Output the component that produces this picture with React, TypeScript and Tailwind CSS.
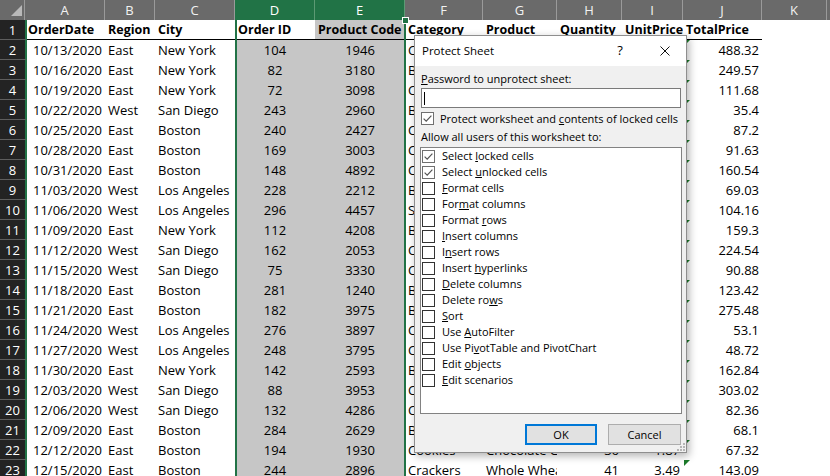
import React from "react";

type Align = "l" | "r" | "c";

const colHeads = [
  { k: "A", w: "w-[80px]", sel: false },
  { k: "B", w: "w-[50px]", sel: false },
  { k: "C", w: "w-[80px]", sel: false },
  { k: "D", w: "w-[80px]", sel: true },
  { k: "E", w: "w-[90px]", sel: true },
  { k: "F", w: "w-[78px]", sel: false },
  { k: "G", w: "w-[74px]", sel: false },
  { k: "H", w: "w-[65px]", sel: false },
  { k: "I", w: "w-[61px]", sel: false },
  { k: "J", w: "w-[79px]", sel: false },
  { k: "K", w: "w-[65px]", sel: false },
  { k: "L", w: "w-[60px]", sel: false },
];

// data cell widths (A is 2px narrower because of the green edge on the row headers)
const cellW = [
  "w-[78px]",
  "w-[50px]",
  "w-[80px]",
  "w-[80px]",
  "w-[90px]",
  "w-[78px]",
  "w-[74px]",
  "w-[65px]",
  "w-[61px]",
  "w-[79px]",
  "w-[65px]",
  "w-[60px]",
];

const aligns: Align[] = ["r", "l", "l", "c", "c", "l", "l", "r", "r", "r", "l", "l"];

const alignCls: Record<Align, string> = {
  l: "justify-start pl-[3px]",
  r: "justify-end pr-[3px]",
  c: "justify-center",
};

const headers = [
  "OrderDate",
  "Region",
  "City",
  "Order ID",
  "Product Code",
  "Category",
  "Product",
  "Quantity",
  "UnitPrice",
  "TotalPrice",
];

const rows: string[][] = [
  ["10/13/2020", "East", "New York", "104", "1946", "Crackers", "Whole Wheat", "56", "8.72", "488.32"],
  ["10/16/2020", "East", "New York", "82", "3180", "Bars", "Carrot", "141", "1.77", "249.57"],
  ["10/19/2020", "East", "New York", "72", "3098", "Cookies", "Chocolate Chip", "59", "1.87", "111.68"],
  ["10/22/2020", "West", "San Diego", "243", "2960", "Bars", "Bran", "20", "1.77", "35.4"],
  ["10/25/2020", "East", "Boston", "240", "2427", "Crackers", "Whole Wheat", "25", "3.49", "87.2"],
  ["10/28/2020", "East", "Boston", "169", "3003", "Cookies", "Arrowroot", "42", "2.18", "91.63"],
  ["10/31/2020", "East", "Boston", "148", "4892", "Cookies", "Oatmeal Raisin", "58", "2.84", "160.54"],
  ["11/03/2020", "West", "Los Angeles", "228", "2212", "Bars", "Carrot", "39", "1.77", "69.03"],
  ["11/06/2020", "West", "Los Angeles", "296", "4457", "Snacks", "Potato Chips", "62", "1.68", "104.16"],
  ["11/09/2020", "East", "New York", "112", "4208", "Bars", "Bran", "85", "1.87", "159.3"],
  ["11/12/2020", "West", "San Diego", "162", "2053", "Cookies", "Chocolate Chip", "123", "1.87", "224.54"],
  ["11/15/2020", "West", "San Diego", "75", "3330", "Crackers", "Whole Wheat", "26", "3.49", "90.88"],
  ["11/18/2020", "East", "Boston", "281", "1240", "Bars", "Carrot", "69", "1.77", "123.42"],
  ["11/21/2020", "East", "Boston", "182", "3975", "Bars", "Bran", "147", "1.87", "275.48"],
  ["11/24/2020", "West", "Los Angeles", "276", "3897", "Cookies", "Arrowroot", "24", "2.18", "53.1"],
  ["11/27/2020", "West", "Los Angeles", "248", "3795", "Cookies", "Oatmeal Raisin", "17", "2.84", "48.72"],
  ["11/30/2020", "East", "New York", "142", "2593", "Bars", "Carrot", "92", "1.77", "162.84"],
  ["12/03/2020", "West", "San Diego", "88", "3953", "Cookies", "Chocolate Chip", "162", "1.87", "303.02"],
  ["12/06/2020", "West", "San Diego", "132", "4286", "Crackers", "Whole Wheat", "24", "3.49", "82.36"],
  ["12/09/2020", "East", "Boston", "284", "2629", "Bars", "Bran", "36", "1.87", "68.1"],
  ["12/12/2020", "East", "Boston", "194", "1930", "Cookies", "Chocolate Chip", "36", "1.87", "67.32"],
  ["12/15/2020", "East", "Boston", "244", "2896", "Crackers", "Whole Wheat", "41", "3.49", "143.09"],
];

const Box = ({ on }: { on?: boolean }) =>
  on ? (
    <span className="w-[13px] h-[13px] shrink-0 border border-[#707070] bg-white flex items-center justify-center">
      <svg width="11" height="11" viewBox="0 0 11 11">
        <path d="M1.6 5.6 L4.2 8.2 L9.4 2.6" fill="none" stroke="#555" strokeWidth="1.2" />
      </svg>
    </span>
  ) : (
    <span className="w-[13px] h-[13px] shrink-0 border border-[#333] bg-white" />
  );

const options: React.ReactNode[] = [
  <>Select <u>l</u>ocked cells</>,
  <>Select <u>u</u>nlocked cells</>,
  <><u>F</u>ormat cells</>,
  <>For<u>m</u>at columns</>,
  <>Format <u>r</u>ows</>,
  <><u>I</u>nsert columns</>,
  <>I<u>n</u>sert rows</>,
  <>Insert <u>h</u>yperlinks</>,
  <><u>D</u>elete columns</>,
  <>Delete ro<u>w</u>s</>,
  <><u>S</u>ort</>,
  <>Use <u>A</u>utoFilter</>,
  <>Use Pi<u>v</u>otTable and PivotChart</>,
  <>Edit <u>o</u>bjects</>,
  <><u>E</u>dit scenarios</>,
];

const ProtectDialog = () => (
  <div className="absolute left-[414px] top-[35px] w-[273px] h-[418px] border border-[#8e8e8e] bg-[#f0f0f0] shadow-[2px_3px_8px_rgba(0,0,0,0.3)] flex flex-col font-['Open_Sans',sans-serif] text-[11px] text-black">
    <div className="h-[30px] shrink-0 bg-white flex items-center pl-[7px] pr-[16px]">
      <span className="flex-1 text-[11.5px]">Protect Sheet</span>
      <span className="w-[10px] text-center text-[13px]">?</span>
      <svg className="ml-[35px]" width="10" height="10" viewBox="0 0 10 10">
        <path d="M0.5 0.5 L9.5 9.5 M9.5 0.5 L0.5 9.5" stroke="#111" strokeWidth="1" />
      </svg>
    </div>

    <div className="flex flex-col px-[6px]">
      <div className="mt-[6px] h-[14px] leading-[14px]">
        <u>P</u>assword to unprotect sheet:
      </div>
      <div className="mt-[2px] h-[20px] w-[260px] border border-[#7a7a7a] bg-white flex items-center pl-[2px]">
        <span className="w-[1px] h-[13px] bg-black" />
      </div>
      <div className="mt-[3px] h-[15px] flex items-center">
        <Box on />
        <span className="ml-[6px] leading-[15px]">
          Protect worksheet and <u>c</u>ontents of locked cells
        </span>
      </div>
      <div className="mt-[4px] h-[14px] leading-[14px]">Allow all users of this worksheet to:</div>
      <div className="mt-[3px] -ml-[1px] w-[262px] h-[267px] border border-[#828282] bg-white flex flex-col">
        {options.map((o, i) => (
          <div key={i} className="h-[16px] flex items-center pl-[1px]">
            <Box on={i < 2} />
            <span className="ml-[7px] leading-[16px] whitespace-nowrap">{o}</span>
          </div>
        ))}
      </div>
      <div className="mt-[10px] -mr-[1px] flex justify-end gap-[11px]">
        <button className="w-[72px] h-[21px] border-2 border-[#0078d7] bg-[#e1e1e1] text-[11px] leading-[17px]">
          OK
        </button>
        <button className="w-[73px] h-[21px] border border-[#adadad] bg-[#e1e1e1] text-[11px] leading-[19px]">
          Cancel
        </button>
      </div>
    </div>

    <svg className="absolute right-[1px] bottom-[1px]" width="8" height="8" viewBox="0 0 8 8">
      <rect x="6" y="0" width="2" height="2" fill="#b5b5b5" />
      <rect x="3" y="3" width="2" height="2" fill="#b5b5b5" />
      <rect x="6" y="3" width="2" height="2" fill="#b5b5b5" />
      <rect x="0" y="6" width="2" height="2" fill="#b5b5b5" />
      <rect x="3" y="6" width="2" height="2" fill="#b5b5b5" />
      <rect x="6" y="6" width="2" height="2" fill="#b5b5b5" />
    </svg>
  </div>
);

export default function App() {
  return (
    <div className="relative w-[830px] h-[476px] overflow-hidden bg-white text-black font-['Open_Sans',sans-serif] text-[13px]">
      {/* column headers */}
      <div className="flex h-[20px]">
        <div className="w-[25px] shrink-0 bg-[#6a6a6a] border-r border-[#9a9a9a] relative">
          <svg className="absolute left-[10px] top-[4px]" width="13" height="13" viewBox="0 0 13 13">
            <path d="M12 1 L12 12 L1 12 Z" fill="#b9b9b9" />
          </svg>
        </div>
        {colHeads.map((c) => (
          <div
            key={c.k}
            className={
              c.sel
                ? `${c.w} shrink-0 bg-[#217346] border-r border-[#5c9a74] text-white flex items-center justify-center pt-[1px]`
                : `${c.w} shrink-0 bg-[#6a6a6a] border-r border-[#9a9a9a] text-[#f2f2f2] flex items-center justify-center pt-[1px]`
            }
          >
            {c.k}
          </div>
        ))}
      </div>

      {/* row 1: headers */}
      <div className="flex h-[20px]">
        <div className="w-[27px] shrink-0 bg-[#232323] border-r-2 border-r-[#217346] border-b border-b-[#5e5e5e] text-white flex items-center justify-center pt-[2px]">
          1
        </div>
        {cellW.map((w, i) => (
          <div
            key={i}
            className={`${w} shrink-0 flex items-center overflow-hidden whitespace-nowrap pt-[2px] font-bold text-[12.5px] ${
              i === 0 ? "pl-[1px]" : "pl-[3px]"
            } ${i < 10 ? "border-b border-black" : ""} ${i === 4 ? "bg-[#c6c6c6]" : ""}`}
          >
            {headers[i] ?? ""}
          </div>
        ))}
      </div>

      {/* data rows */}
      {rows.map((r, ri) => (
        <div key={ri} className="flex h-[20px]">
          <div className="w-[27px] shrink-0 bg-[#232323] border-r-2 border-r-[#217346] border-b border-b-[#5e5e5e] text-white flex items-center justify-center pt-[2px]">
            {ri + 2}
          </div>
          {cellW.map((w, i) => (
            <div
              key={i}
              className={`${w} shrink-0 relative flex items-center overflow-hidden whitespace-nowrap pt-[2px] ${alignCls[aligns[i]]} ${
                i === 3 || i === 4 ? "bg-[#c6c6c6]" : ""
              }`}
            >
              {i === 9 && (
                <span className="absolute left-[1px] top-0 w-0 h-0 border-t-[6px] border-r-[6px] border-t-[#1b7a2a] border-r-transparent" />
              )}
              {r[i] ?? ""}
            </div>
          ))}
        </div>
      ))}

      {/* selection outline on columns D:E */}
      <div className="absolute left-[235px] top-[20px] w-[171px] h-[460px] border-x-2 border-[#217346] pointer-events-none" />
      <div className="absolute left-[402px] top-[17px] w-[7px] h-[7px] bg-[#217346] border border-white" />

      <ProtectDialog />
    </div>
  );
}
